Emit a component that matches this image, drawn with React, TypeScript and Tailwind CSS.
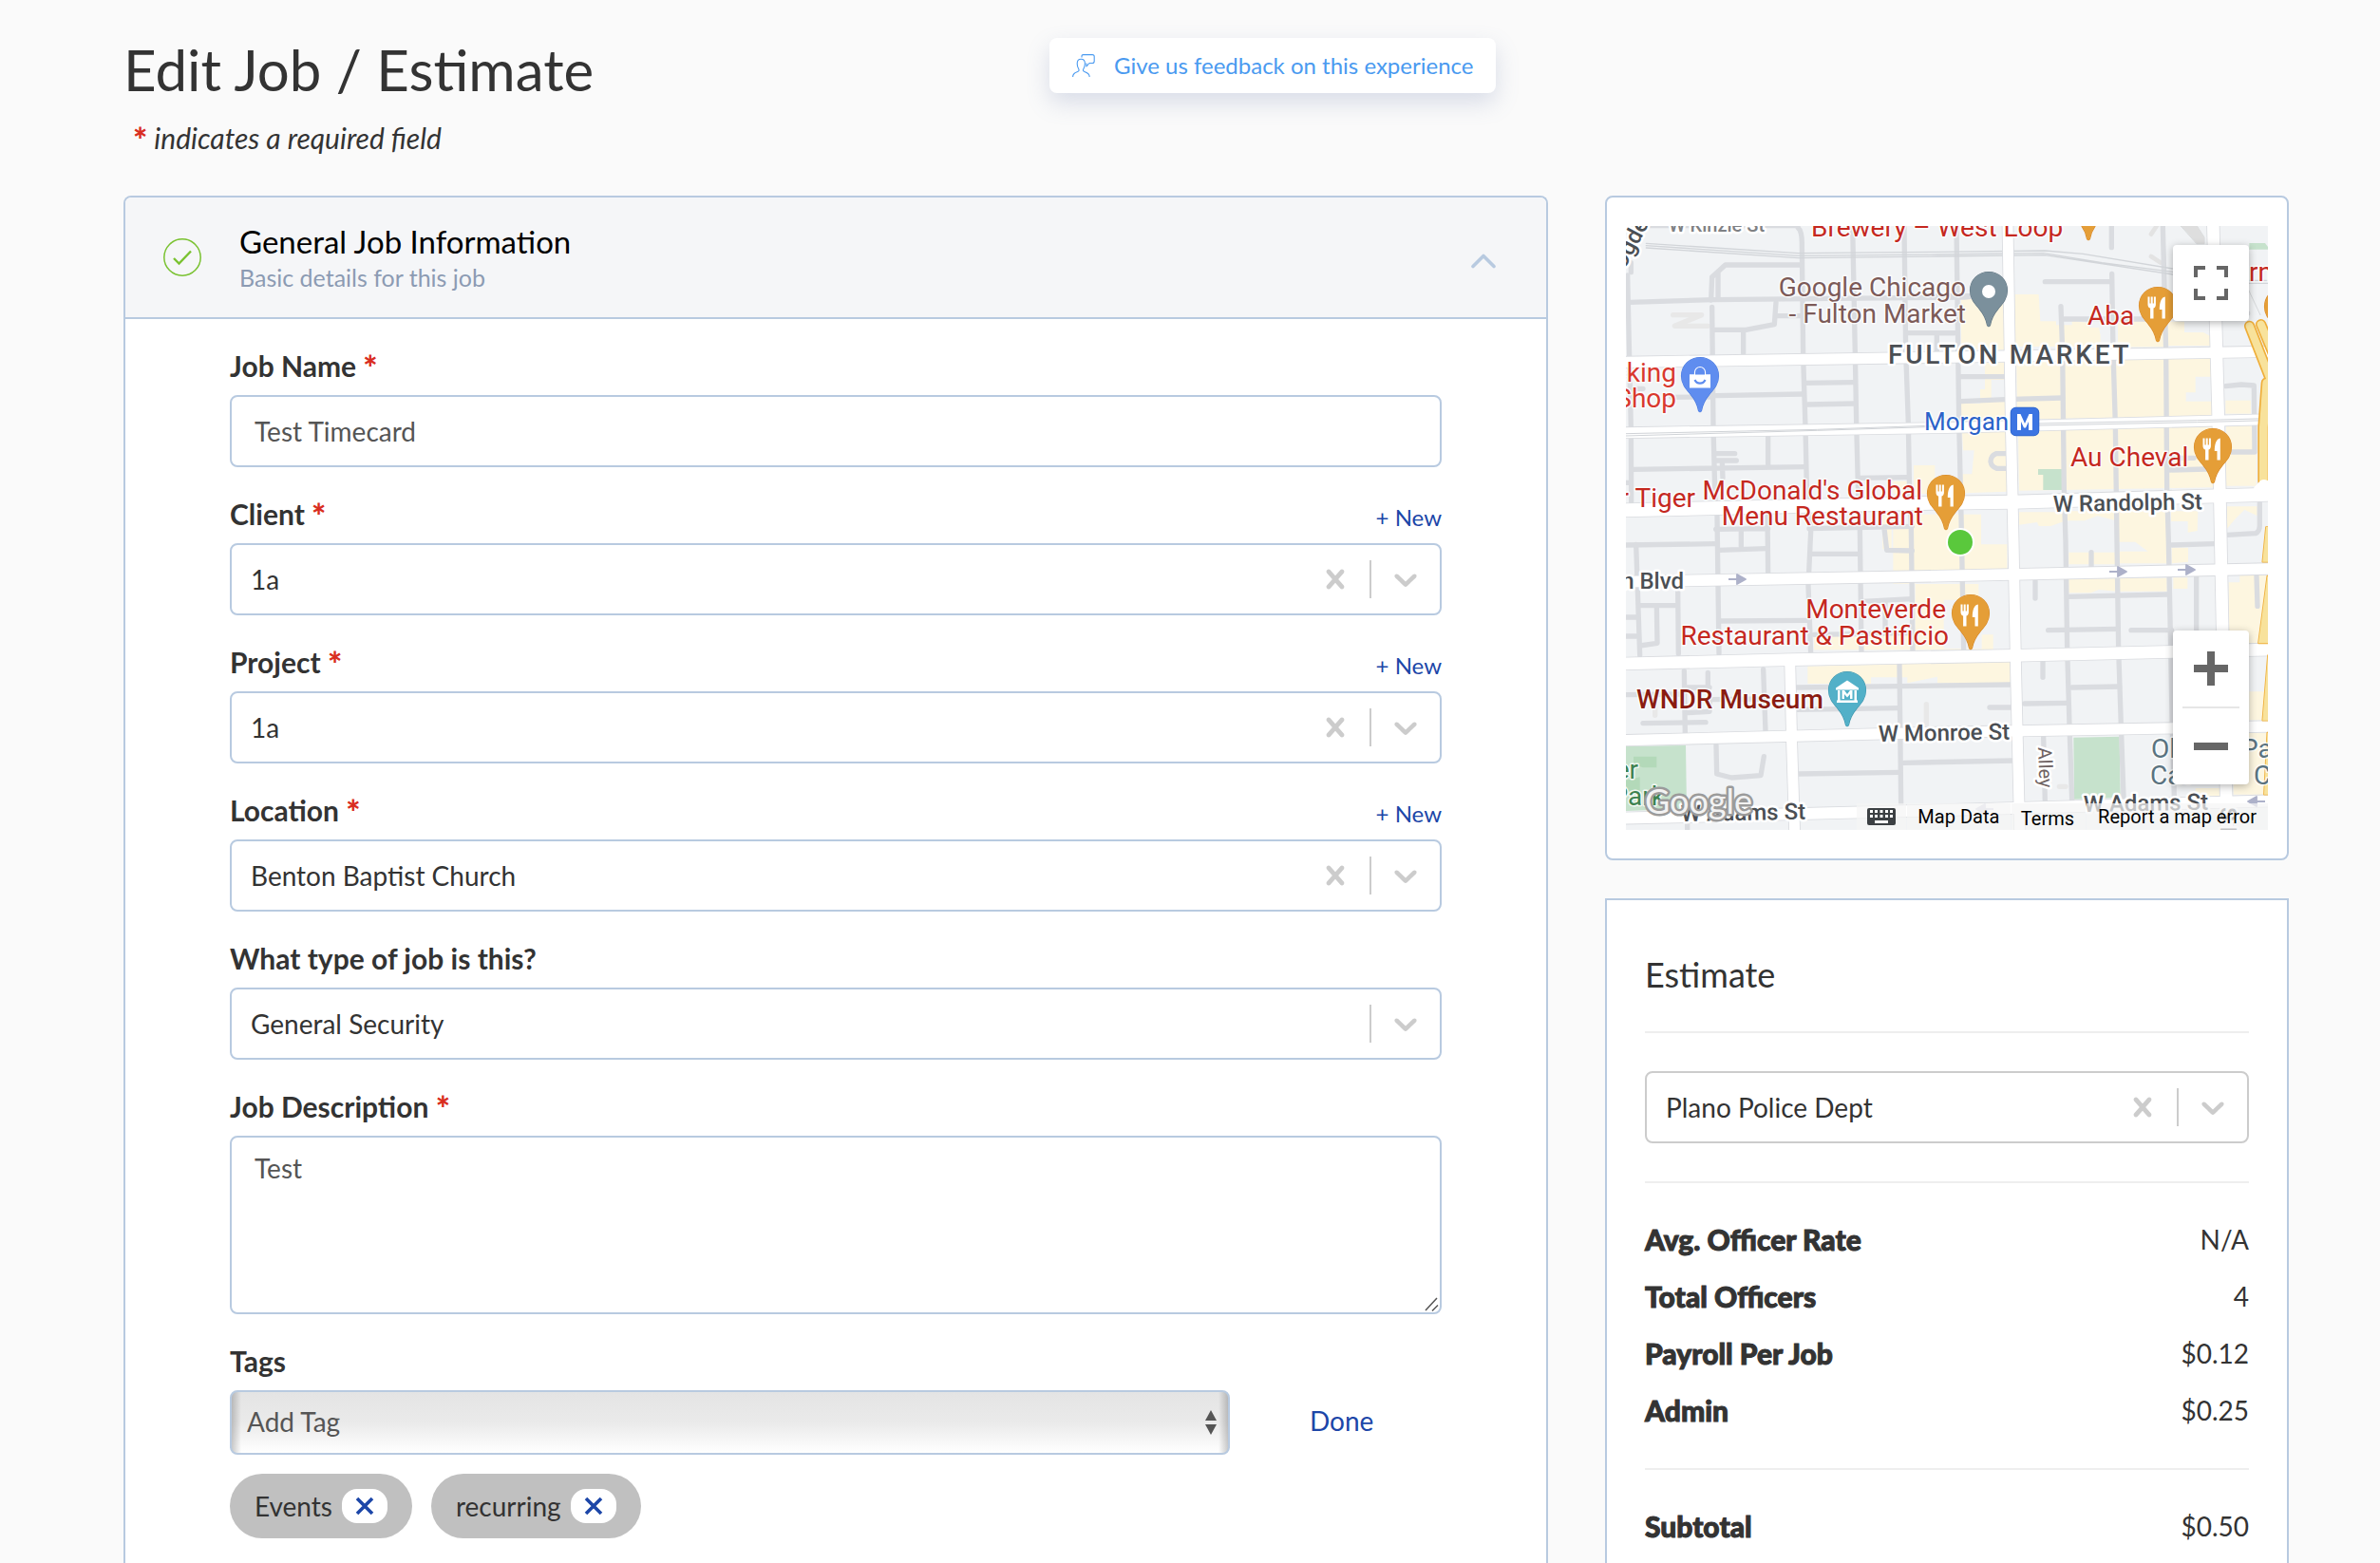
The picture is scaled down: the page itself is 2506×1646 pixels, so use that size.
import { useState, type ReactNode } from "react";

const BORDER = "border-[#b8cae0]";

function Star() {
  return <span className="align-[-4px] text-[36px] leading-6 font-black text-[#d92d20] not-italic">*</span>;
}

function ClearIcon() {
  return (
    <svg viewBox="0 0 20 20" className="size-10" fill="currentColor">
      <path d="M14.348 14.849c-0.469 0.469-1.229 0.469-1.697 0l-2.651-3.030-2.651 3.029c-0.469 0.469-1.229 0.469-1.697 0-0.469-0.469-0.469-1.229 0-1.697l2.758-3.150-2.759-3.152c-0.469-0.469-0.469-1.228 0-1.697s1.228-0.469 1.697 0l2.652 3.031 2.651-3.031c0.469-0.469 1.228-0.469 1.697 0s0.469 1.229 0 1.697l-2.758 3.152 2.758 3.150c0.469 0.469 0.469 1.229 0 1.698z" />
    </svg>
  );
}

function ChevronDown() {
  return (
    <svg viewBox="0 0 20 20" className="size-10" fill="currentColor">
      <path d="M4.516 7.548c0.436-0.446 1.043-0.481 1.576 0l3.908 3.747 3.908-3.747c0.533-0.481 1.141-0.446 1.574 0 0.436 0.445 0.408 1.197 0 1.615-0.406 0.418-4.695 4.502-4.695 4.502-0.217 0.223-0.502 0.335-0.787 0.335s-0.57-0.112-0.789-0.335c0 0-4.287-4.084-4.695-4.502s-0.436-1.17 0-1.615z" />
    </svg>
  );
}

function PickBox({ id, value, clearable = true, border = BORDER, label }: { id: string; value: string; clearable?: boolean; border?: string; label?: string }) {
  const [current, setCurrent] = useState(value);
  return (
    <div className={`flex h-[76px] items-center rounded-lg border-2 bg-white text-[#ccc] ${border}`}>
      <select
        id={id}
        aria-label={label}
        value={current}
        onChange={(e) => setCurrent(e.target.value)}
        className="h-full min-w-0 flex-1 appearance-none bg-transparent pl-5 text-[28px] text-[#333] outline-none"
      >
        <option value="" />
        <option value={value}>{value}</option>
      </select>
      {clearable && (
        <button type="button" aria-label="Clear" onClick={() => setCurrent("")} className="px-4">
          <ClearIcon />
        </button>
      )}
      <span className="h-10 w-0.5 bg-[#ccc]" />
      <span className="px-4">
        <ChevronDown />
      </span>
    </div>
  );
}

function Field({ id, label, required, action, children }: { id: string; label: string; required?: boolean; action?: boolean; children: ReactNode }) {
  return (
    <div className="flex flex-col gap-3.5">
      <div className="flex h-[34px] items-end justify-between">
        <label htmlFor={id} className="text-[30px] leading-[34px] font-bold">
          {label} {required && <Star />}
        </label>
        {action && (
          <button type="button" className="text-[24px] leading-[26px] text-[#1c46a8]">
            + New
          </button>
        )}
      </div>
      {children}
    </div>
  );
}

function Chip({ text }: { text: string }) {
  return (
    <li className="flex h-[68px] items-center gap-2.5 rounded-full bg-[#c0c0c0] px-[26px] text-[28px]">
      {text}
      <button type="button" aria-label={`Remove ${text}`} className="flex h-9 w-12 items-center justify-center rounded-2xl bg-white">
        <svg viewBox="0 0 20 20" className="size-5" stroke="#1c46a8" strokeWidth="3.6">
          <path d="M2 2 18 18M18 2 2 18" />
        </svg>
      </button>
    </li>
  );
}

/* ---------- map drawing ---------- */

function Pin({ x, y, fill, edge, children }: { x: number; y: number; fill: string; edge: string; children?: ReactNode }) {
  return (
    <g transform={`translate(${x} ${y})`}>
      <path
        d="M0 .5C-11 .5-19.5 9-19.5 20c0 8 4.500 13 9.500 19C-5 45-2.500 50-1.500 56.500Q0 59 1.500 56.500C2.500 50 5 45 10 39c5-6 9.500-11 9.500-19C19.500 9 11 .5 0 .5Z"
        fill={fill}
        stroke={edge}
        strokeWidth="1.2"
      />
      {children}
    </g>
  );
}

function FoodPin({ x, y }: { x: number; y: number }) {
  return (
    <Pin x={x} y={y} fill="#e59e37" edge="#d98a28">
      <g fill="#fff">
        <path d="M-10.500 10.500h2v7h1.200v-7h2v7h1.200v-7h2v8.500c0 2-1.300 3.200-2.400 3.600V33.500h-3.400V22.600c-1.200-.4-2.600-1.600-2.600-3.600Z" />
        <path d="M7.800 10.500V33.500H4.500V24H1.800C1.800 17 3.500 11 7.800 10.500Z" />
      </g>
    </Pin>
  );
}

function Arrow({ x, y, left, faded }: { x: number; y: number; left?: boolean; faded?: boolean }) {
  return (
    <path
      transform={`translate(${x} ${y})${left ? " rotate(180)" : ""}`}
      d="M-9 0H1M0-5 9 0 0 5Z"
      fill="#adb1c9"
      stroke="#adb1c9"
      strokeWidth="1.800"
      opacity={faded ? 0.5 : 1}
    />
  );
}

const commercial = [
  "M1155 375h135v160h-135Z",
  "M1325 360h75l5 85h50v12h50v-14l55 8v14h30l5 25v35h-270Z",
  "M1650 440h150v86h-150ZM1805 446h55v34h60l22 12v30h-137Z",
  "M1230 575h60v55h-40v60h45v70h-140v-55h60v-45h15Z",
  "M1330 572l615-12v60h-50v50h-30v28h82v45l-615 12Z",
  "M1990 695h80v42h-80Z",
  "M1158 790h140l3 193-142 5v-60h30l7-75h-35Z",
  "M1335 785l615-12 3 197-615 10Z",
  "M1992 775h95v190h-95Z",
  "M1005 900h67v90h-67ZM940 950h45v40h-45Z",
  "M1003 1055h215v95h82v80l-297 6ZM940 1100h63v136h-63ZM905 1055h30v110h-28Z",
  "M1338 1048h140v30l-40 14h-38l-5-12-57 8ZM1490 1045h155v30l-60-15-40 15h-55Z",
  "M1650 1045h155v165h-155v-38h95l-40-30h-55ZM1818 1045h85l-2 62-30 5v-35h-53Z",
  "M1495 1175h150v38h-150ZM1820 1160h52v45l-52 5Z",
  "M1995 1100v-70h95v30l-40-20-30 30Z",
  "M940 1275h270v50h-110v155h120v-45h36v48H690v-50h320v-160h-70Z",
  "M1495 1258h150v40l-55-5-25 10h-70ZM1650 1256h155v42h-155ZM1825 1255h45v35h-45Z",
  "M2000 1270h35v-22h85v215h-120Z",
  "M670 1535l640-15v68H1080v-20l-95 20v-18h-115v20H670Z",
  "M2065 1615h58v90h-58ZM2015 1745h108v195h-108ZM1895 1920h80v25h-80Z",
];

const minorRoads = [
  "M101 300 112 780 113 1015M128 1150 140 1500",
  "M368 400 372 780 378 1015M384 1060 390 1495",
  "M640 150Q652 160 652 200L656 560 663 780 668 1010 680 1110 672 1280 680 1495",
  "M812 144 820 545 824 765 830 1000 835 1095 840 1495",
  "M975 144 980 540 988 765 992 1000 997 1095 1002 1490",
  "M1140 144 1148 760 1155 1060 1163 1485",
  "M1470 398 1475 540 1480 975 1485 1140 1490 1480 1497 1720 1505 1960",
  "M1630 144V212M1631 295 1635 540 1642 770 1647 1140 1652 1480 1660 1720 1668 1945",
  "M1792 144 1802 540 1805 975 1810 1140 1817 1480 1822 1740 1828 1950",
  "M280 1550 283 1745M355 1555V1600M530 1545 537 1740M960 1530 965 1970",
  "M381 1785 383 1875 430 1887 522 1880 532 1820",
  "M108 385 370 377 1165 369 1230 362",
  "M365 378 368 305 410 267H645M387 290V370",
  "M375 472H475L565 455 570 385M570 428H650M467 475V545",
  "M985 482H1140M1078 490V540",
  "M660 640 815 638M380 680 655 675M240 685 370 684M670 708 820 705M110 658H150",
  "M120 913 660 905M545 810V900M380 863H440M380 885H445M400 890 402 940M830 940 985 938",
  "M380 1102 545 1100M543 1060 545 1240M675 1100 1000 1093M912 1100 920 1168 1000 1170",
  "M96 1152 375 1148M390 1168 540 1163M460 1105V1160M680 1180H835",
  "M140 1343H260M260 1295 262 1495M193 1345 195 1462 140 1470M96 1380H130M96 1440H130M390 1392 670 1390M845 1330 1000 1322M690 1435 1000 1430M915 1335V1430",
  "M635 1602 960 1598 1310 1593M635 1672 960 1667M96 1625 280 1623M290 1602H360M370 1640 530 1638M290 1682 360 1678 362 1625M150 1715 348 1712",
  "M640 1875 960 1870M975 1840 1320 1833M1245 1665H1315",
  "M1420 320H1630M1475 438H1800M1155 620H1290M1155 698 1295 692 1475 687M1080 482H1130M1080 365H1180",
  "M1295 863H1265Q1248 870 1248 888 1250 905 1268 910H1295M1815 915 1930 912M1815 877H1890M1990 650 2040 645 2080 648 2082 858H2010M1990 420H2060",
  "M1995 1120 2085 1115Q2098 1110 2098 1090V1020",
  "M1566 1175V1220M1389 1265V1320M1495 1315 1805 1308M1430 1421 1650 1417M1692 1421H1820M1815 1152 1955 1148M1898 1250V1430M2088 1250 2091 1345",
  "M1413 1515V1570M1355 1653 1490 1651M1505 1602 1655 1599M1415 1760 1420 1960",
  "M96 955H112M112 290V260",
  "M290 2030V2052",
];

const majorRoads: [string, number][] = [
  ["M90 574 1140 558 2130 541", 34],
  ["M90 797 1080 782 2130 755", 33],
  ["M90 1042 1080 1019 1320 1016 2130 992", 42],
  ["M90 1268 1080 1250 2130 1227", 35],
  ["M90 1527 620 1514 1320 1501 2130 1482", 38],
  ["M90 1769 1080 1744 2130 1725", 34],
  ["M90 2015 1080 1990 2130 1960", 36],
  ["M1302 140 1312 760 1320 1140 1328 1560 1340 2060", 33],
  ["M1951 140 1967 740 1975 1140 1982 1500 1995 2060", 38],
  ["M614 1514 620 1780 629 2060", 33],
];

const highways = [
  ["M2066 460 2140 650", 34],
  ["M2102 455 2150 570", 34],
  ["M2120 640 2110 780V950", 36],
] as const;

function CityMap() {
  return (
    <svg
      viewBox="0 0 676 636"
      className="block w-full [&_text]:font-[Roboto,sans-serif]"
      role="img"
      aria-label="Map of Fulton Market, Chicago"
      paintOrder="stroke"
      strokeLinejoin="round"
    >
      <rect width="676" height="636" fill="#f1f3f5" />
      <g transform="translate(-32 -48) scale(0.33333)" fill="none" strokeLinecap="round">
        {commercial.map((d) => (
          <path key={d} d={d} fill="#fdf6e0" />
        ))}
        <path d="M96 1788 285 1785 288 1985 96 1992ZM1510 1760 1655 1757 1658 1950 1512 1955ZM1398 912H1475V978H1414V930H1398ZM2065 198H2115L2124 210V218H2065Z" fill="#c6e2cc" />
        <path d="M120 1820H193V1855H150L120 1845ZM96 1895 140 1885V1930H96Z" fill="#b3d9b9" />
        <path d="M245 425H335L250 460H355M188 1640V1690M1045 1655V1720M1465 1915H1485" stroke="#e8e8e8" strokeWidth="16" />
        <path d="M1755 170 1775 140M1755 240 1785 260" stroke="#e3e3e3" strokeWidth="14" />
        <path d="M1850 144H1900L1923 180V200H1900ZM2060 340 2100 425" fill="#dedede" stroke="#c9cbcd" strokeWidth="2" />
        {minorRoads.map((d) => (
          <path key={d} d={d} stroke="#dadce0" strokeWidth="16" />
        ))}
        <path d="M170 144H640" stroke="#dadce0" strokeWidth="14" />
        <g stroke="#d2d5d9" strokeWidth="4">
          <path d="M160 199 640 230 1080 226 1420 222 1540 232 1830 280M160 206 640 238 1080 234 1415 230 1600 260 1830 290M160 213 640 245 1080 240 1420 236 1830 298M2060 316H2124M2060 325H2124" />
        </g>
        {majorRoads.map(([d, w]) => (
          <path key={d} d={d} stroke="#d9dbdf" strokeWidth={w + 5} />
        ))}
        {majorRoads.map(([d, w]) => (
          <path key={d} d={d} stroke="#fff" strokeWidth={w} />
        ))}
        <path d="M96 800 700 787 1080 774M96 807 700 790 1080 778M1400 768 1900 758 2124 752M1400 774 1900 764 2124 758" stroke="#d0d3d7" strokeWidth="3" />
        {highways.map(([d, w]) => (
          <path key={d} d={d} stroke="#efae3a" strokeWidth={w} />
        ))}
        {highways.map(([d, w]) => (
          <path key={d} d={d} stroke="#f8e29b" strokeWidth={w - 10} />
        ))}
        <g fill="#f8e29b" stroke="#efae3a" strokeWidth="5">
          <path d="M2118 1095H2140V1205H2107ZM2122 1250H2150L2130 1462H2094ZM2124 1500H2150V1706H2107ZM2122 1745H2150V1940H2112Z" />
        </g>
        <path d="M2098 951Q2110 935 2140 960V1010H2080V970Z" fill="#fff" />
      </g>

      <g fill="#4b4f54" stroke="#fff" strokeWidth="5" fontWeight="500" fontSize="24">
        <text x="45" y="6" fontSize="20" fill="#7f8184">W Kinzie St</text>
        <text transform="translate(-2 47) rotate(-62)">Ogden</text>
        <text x="276" y="145" fontSize="28" className="tracking-widest">FULTON MARKET</text>
        <text transform="translate(450 301) rotate(-1)">W Randolph St</text>
        <text x="61" y="382" textAnchor="end">n Blvd</text>
        <text transform="translate(266 543) rotate(-1)">W Monroe St</text>
        <text transform="translate(58 627) rotate(-1)">W Adams St</text>
        <text transform="translate(482 617) rotate(-1)">W Adams St</text>
        <text transform="translate(434 549) rotate(88)" fontSize="20" fontWeight="400" fill="#6e6262">Alley</text>
        <text transform="translate(626 612) rotate(90)">S I</text>
      </g>

      <g fontSize="28" stroke="#fff" strokeOpacity="0.8" strokeWidth="3">
        <g fill="#c5281f">
          <text x="195" y="11">Brewery – West Loop</text>
          <text x="486" y="104">Aba</text>
          <text x="468" y="253">Au Cheval</text>
          <text x="73" y="296" textAnchor="end">r Tiger</text>
          <text x="312" y="288" textAnchor="end">McDonald&apos;s Global</text>
          <text x="313" y="315" textAnchor="end">Menu Restaurant</text>
          <text x="337" y="413" textAnchor="end">Monteverde</text>
          <text x="340" y="441" textAnchor="end">Restaurant &amp; Pastificio</text>
          <text x="656" y="58">rn</text>
        </g>
        <g fill="#d9382e" textAnchor="end">
          <text x="53" y="164">cking</text>
          <text x="53" y="191">Shop</text>
        </g>
        <text x="11" y="508" fill="#8a1c12" fontWeight="500">WNDR Museum</text>
        <g fill="#7c5a58" textAnchor="end">
          <text x="358" y="74">Google Chicago</text>
          <text x="358" y="102">- Fulton Market</text>
        </g>
        <text x="314" y="215" fontSize="26" fill="#2b62c9">Morgan</text>
        <g fill="#3d8250" textAnchor="end">
          <text x="13" y="582">er</text>
          <text x="41" y="610">Park</text>
        </g>
        <g fill="#5a7380">
          <text x="553" y="560">Old</text>
          <text x="552" y="588">Cat</text>
          <text x="648" y="560">Pat</text>
          <text x="661" y="588">C</text>
        </g>
      </g>

      <Arrow x={117} y={372} />
      <Arrow x={518} y={364} />
      <Arrow x={590} y={362} />
      <Arrow x={664} y={606} left />
      <Arrow x={378} y={614} left faded />

      <rect x="405.500" y="191.500" width="29" height="29" rx="5" fill="#3b74e2" stroke="#2b62c9" strokeWidth="1.500" />
      <path d="M412 215V198h3.500l4.500 10 4.500-10h3.500V215h-4V206l-3 6.500h-2L416 206V215Z" fill="#fff" />

      <Pin x={382} y={48} fill="#7b909c" edge="#627784">
        <circle cy="21" r="7" fill="#fff" />
      </Pin>
      <Pin x={78} y={138} fill="#5f8def" edge="#4a7be0">
        <path d="M-11 18.500H11L11 32.500H-11Z" fill="#fff" />
        <path d="M-5 19v-3a5 5 0 0 1 10 0v3" fill="#5f8def" stroke="#fff" strokeWidth="2.200" />
        <path d="M-5.500 24a6 6 0 0 0 11 0" fill="none" stroke="#5f8def" strokeWidth="2.200" />
        <path d="M-11 18.500H11V22H-11Z" fill="#fff" />
      </Pin>
      <Pin x={233} y={469} fill="#52b0c8" edge="#3f97af">
        <path d="M-12 17.500 0 9.500 12 17.500V19.500H-12ZM-10 20h2.500v11H-10ZM7.500 20H10V31H7.500ZM-11 30.500H11V33H-11ZM-5.500 29V20h2.500L0 24l3-4h2.500v9H3V24L0 27.500-3 24V29Z" fill="#fff" />
      </Pin>
      <FoodPin x={487} y={-43} />
      <FoodPin x={692} y={65} />
      <FoodPin x={560} y={64} />
      <FoodPin x={618} y={213} />
      <FoodPin x={337} y={262} />
      <FoodPin x={363} y={388} />
      <circle cx="352" cy="333" r="13" fill="#5ac83c" stroke="#fff" strokeWidth="4" />
      <text x="20" y="619" fontSize="36" fill="#fff" fillOpacity="0.9" stroke="#9b9b9b" strokeWidth="5" style={{ fontFamily: "Lato, sans-serif" }}>
        Google
      </text>
    </svg>
  );
}

function KeyboardIcon() {
  return (
    <svg viewBox="0 0 30 18" className="h-[18px] w-[30px]">
      <rect width="30" height="18" rx="2" fill="#3c4043" />
      <path d="M3 2h3v3H3zM8 2h3v3H8zM13.500 2h3v3h-3zM19 2h3v3h-3zM24 2h3v3h-3zM3 7h3v3H3zM8 7h3v3H8zM13.500 7h3v3h-3zM19 7h3v3h-3zM24 7h3v3h-3zM8 13h14v3H8z" fill="#fff" />
    </svg>
  );
}

function MapCard() {
  return (
    <section className={`rounded-lg border-2 bg-white px-5 py-[30px] ${BORDER}`}>
      <div className="relative overflow-hidden font-[Roboto,sans-serif]">
        <CityMap />
        <button type="button" aria-label="Toggle fullscreen view" className="absolute top-5 right-5 flex size-20 items-center justify-center rounded bg-white shadow-[0_2px_8px_rgba(0,0,0,0.3)]">
          <svg viewBox="0 0 36 36" className="size-9" fill="none" stroke="#666" strokeWidth="4">
            <path d="M2 12V2H12M24 2H34V12M34 24V34H24M12 34H2V24" />
          </svg>
        </button>
        <div className="absolute right-5 bottom-12 flex flex-col items-center rounded bg-white shadow-[0_2px_8px_rgba(0,0,0,0.3)]">
          <button type="button" aria-label="Zoom in" className="flex size-20 items-center justify-center">
            <svg viewBox="0 0 36 36" className="size-9" stroke="#666" strokeWidth="8">
              <path d="M0 18H36M18 0V36" />
            </svg>
          </button>
          <span className="h-0.5 w-[60px] bg-[#e6e6e6]" />
          <button type="button" aria-label="Zoom out" className="flex size-20 items-center justify-center">
            <svg viewBox="0 0 36 36" className="size-9" stroke="#666" strokeWidth="8">
              <path d="M0 18H36" />
            </svg>
          </button>
        </div>
        <div className="absolute right-0 bottom-0 flex h-7 items-center gap-px text-[20px] leading-7 text-black">
          <button type="button" aria-label="Keyboard shortcuts" className="flex h-full w-[52px] items-center justify-center bg-[#f5f5f5]/70">
            <KeyboardIcon />
          </button>
          <button type="button" className="h-full w-[109px] bg-[#f5f5f5]/70 leading-7">Map Data</button>
          <a href="#terms" className="h-full bg-[#f5f5f5]/70 pr-3 pl-2.5 leading-8">Terms</a>
          <a href="#report" className="h-full bg-[#f5f5f5]/70 px-3">Report a map error</a>
        </div>
      </div>
    </section>
  );
}

/* ---------- estimate ---------- */

function Row({ name, value }: { name: string; value: string }) {
  return (
    <div className="flex justify-between leading-[60px]">
      <dt className="text-[30px] font-black [-webkit-text-stroke:1px_#333]">{name}</dt>
      <dd className="text-[28px]">{value}</dd>
    </div>
  );
}

function EstimateCard() {
  return (
    <section className={`flex-1 border-2 border-b-0 bg-white px-10 pt-14 ${BORDER}`}>
      <h2 className="mb-[38px] text-[36px] leading-[44px]">Estimate</h2>
      <div className="border-y-2 border-[#eee] py-10">
        <PickBox id="department" label="Department" value="Plano Police Dept" border="border-[#ccc]" />
      </div>
      <dl>
        <div className="border-b-2 border-[#eee] pt-[29px] pb-[31px]">
          <Row name="Avg. Officer Rate" value="N/A" />
          <Row name="Total Officers" value="4" />
          <Row name="Payroll Per Job" value="$0.12" />
          <Row name="Admin" value="$0.25" />
        </div>
        <div className="pt-[29px]">
          <Row name="Subtotal" value="$0.50" />
        </div>
      </dl>
    </section>
  );
}

/* ---------- page ---------- */

export default function App() {
  return (
    <main className="flex h-screen flex-col overflow-hidden bg-[#fafafa] pr-24 pl-[130px] font-[Lato,sans-serif] text-[#333]">
      <header className="flex shrink-0 items-start pt-9 pb-11">
        <div className="w-[975px]">
          <h1 className="text-[60px] leading-[74px]">Edit Job / Estimate</h1>
          <p className="mt-[18px] h-[34px] pl-2.5 text-[30px] leading-[34px] italic">
            <Star /> indicates a required field
          </p>
        </div>
        <button type="button" className="mt-1 flex h-[58px] items-center gap-5 rounded-lg bg-white px-6 text-[24px] text-[#4a9af0] shadow-[0_10px_24px_rgba(100,120,170,0.22)]">
          <svg viewBox="0 0 24 24" className="size-6" fill="none" stroke="currentColor" strokeWidth="1.100" strokeLinejoin="round">
            <path d="M.6 24c0-3.500 2-4.300 4.500-5.200 2-.7 2.400-1.500 1.700-3C5.700 14 5.200 12.300 5.200 10c0-3 1.500-4.700 4.100-4.700S13.400 7 13.400 10c0 2.300-.6 4-1.600 5.800-.8 1.500-.3 2.300 1.600 3 2.500.9 4.800 1.700 4.800 5.200" />
            <path d="M10 3.500V2.200Q10 .6 11.600.6h9.600q2 0 2 2V7.500q0 2-2 2H18l-3 3.500V9.500" />
          </svg>
          Give us feedback on this experience
        </button>
      </header>

      <div className="grid min-h-0 flex-1 grid-cols-[25fr_12fr] gap-[60px]">
        <section className={`overflow-hidden rounded-t-lg border-2 border-b-0 bg-white ${BORDER}`}>
          <div className={`flex h-32 items-center border-b-2 bg-[#f5f6f8] pr-[52px] pl-10 ${BORDER}`}>
            <svg viewBox="0 0 40 40" className="size-10" fill="none" stroke="#7ac231">
              <circle cx="20" cy="20" r="19.200" strokeWidth="1.500" />
              <path d="M11 21 16.500 26.500 29 13.500" strokeWidth="2.400" />
            </svg>
            <div className="ml-10 flex-1">
              <h2 className="text-[33px] leading-[38px] text-black">General Job Information</h2>
              <p className="mt-1 text-[25px] leading-[30px] text-[#8c9bb3]">Basic details for this job</p>
            </div>
            <button type="button" aria-label="Collapse section" className="mt-2">
              <svg viewBox="0 0 28 16" className="h-4 w-7" fill="none" stroke="#b8cae0" strokeWidth="3.600" strokeLinecap="round" strokeLinejoin="round">
                <path d="M3 13.500 14 2.500 25 13.500" />
              </svg>
            </button>
          </div>

          <form className="flex flex-col gap-8 px-[110px] pt-8">
            <Field id="job-name" label="Job Name" required>
              <input id="job-name" defaultValue="Test Timecard" className={`h-[76px] w-full rounded-lg border-2 bg-white px-6 text-[28px] text-[#555] ${BORDER}`} />
            </Field>
            <Field id="client" label="Client" required action>
              <PickBox id="client" value="1a" />
            </Field>
            <Field id="project" label="Project" required action>
              <PickBox id="project" value="1a" />
            </Field>
            <Field id="location" label="Location" required action>
              <PickBox id="location" value="Benton Baptist Church" />
            </Field>
            <Field id="job-type" label="What type of job is this?">
              <PickBox id="job-type" value="General Security" clearable={false} />
            </Field>
            <Field id="description" label="Job Description" required>
              <div className="relative">
                <textarea id="description" defaultValue="Test" className={`block h-[188px] w-full resize-none rounded-lg border-2 bg-white px-6 py-3 text-[28px] leading-10 text-[#555] ${BORDER}`} />
                <svg viewBox="0 0 16 16" className="pointer-events-none absolute right-0.5 bottom-0.5 size-4" stroke="#555" strokeWidth="1.500">
                  <path d="M1 14 13 1M8 14.500 14 8.500" />
                </svg>
              </div>
            </Field>
            <Field id="tags" label="Tags">
              <div className="flex items-center">
                <div className="relative flex-1">
                  <select
                    id="tags"
                    className={`block h-[68px] w-full appearance-none rounded-lg border-2 bg-[linear-gradient(to_right,#00000033,transparent_10px,transparent_calc(100%-10px),#00000033),linear-gradient(to_bottom,#e4e4e4,#eaeaea_50%,#fff)] px-4 pb-0.5 text-[28px] text-[#555] ${BORDER}`}
                  >
                    <option>Add Tag</option>
                  </select>
                  <svg viewBox="0 0 12 26" className="pointer-events-none absolute top-[21px] right-3.5 h-[26px] w-3" fill="#555">
                    <path d="M0 11 6 0 12 11ZM0 15H12L6 26Z" />
                  </svg>
                </div>
                <div className="w-[223px] pb-1 pl-[84px]">
                  <button type="button" className="text-[28px] text-[#1c46a8]">Done</button>
                </div>
              </div>
              <ul className="mt-1.5 flex gap-5">
                <Chip text="Events" />
                <Chip text="recurring" />
              </ul>
            </Field>
          </form>
        </section>

        <aside className="flex flex-col gap-10">
          <MapCard />
          <EstimateCard />
        </aside>
      </div>
    </main>
  );
}
